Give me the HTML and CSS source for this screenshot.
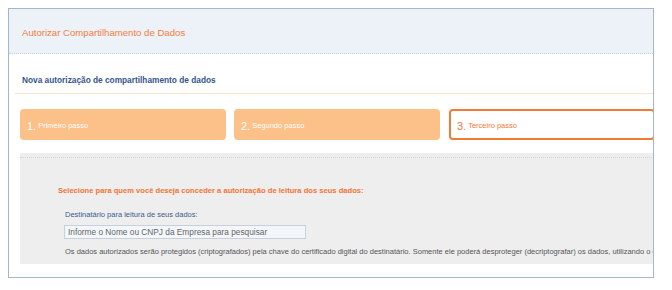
FILE: index.html
```html
<!DOCTYPE html>
<html lang="pt-BR">
<head>
    <meta charset="UTF-8">
    <meta name="viewport" content="width=device-width, initial-scale=1.0">
    <title>Autorizar Compartilhamento de Dados</title>
    <link rel="stylesheet" href="styles.css">
</head>
<body>
    <div class="frame">
        <!-- Cabeçalho -->
        <div class="header">
            <h1>Autorizar Compartilhamento de Dados</h1>
        </div>

        <div class="main">
            <h2 class="sub-title">Nova autorização de compartilhamento de dados</h2>

            <!-- Passos -->
            <div class="steps">
                <div class="step done"><span class="num">1.</span> Primeiro passo</div>
                <div class="step done"><span class="num">2.</span> Segundo passo</div>
                <div class="step active"><span class="num">3.</span> Terceiro passo</div>
            </div>

            <!-- Painel do terceiro passo -->
            <div class="panel">
                <div class="panel-inner">
                    <h3>Selecione para quem você deseja conceder a autorização de leitura dos seus dados:</h3>
                    <div class="field">
                        <label for="destinatario">Destinatário para leitura de seus dados:</label>
                        <input type="text" id="destinatario" placeholder="Informe o Nome ou CNPJ da Empresa para pesquisar">
                        <p class="note">Os dados autorizados serão protegidos (criptografados) pela chave do certificado digital do destinatário. Somente ele poderá desproteger (decriptografar) os dados, utilizando o certificado digital correspondente.</p>
                    </div>
                </div>
            </div>
        </div>
    </div>
</body>
</html>
```

FILE: styles.css
```css
body {
    font-family: "Liberation Sans", Arial, sans-serif;
    margin: 0;
    padding: 8px;
    background: #fff;
}

.frame {
    width: 644px;
    height: 268px;
    border: 1px solid #a3b6ca;
    overflow: hidden;
    background: #fff;
}

.header {
    height: 45px;
    box-sizing: border-box;
    display: flex;
    align-items: center;
    padding: 2px 0 0 13px;
    background: #edf2f8;
    border-bottom: 1px dotted #c3d1e1;
}

.header h1 {
    margin: 0;
    font-size: 9.6px;
    font-weight: normal;
    color: #f57d3f;
}

.main {
    padding-left: 6px;
}

.sub-title {
    margin: 0;
    padding: 21px 0 8px 7px;
    font-size: 8.3px;
    line-height: 10px;
    font-weight: bold;
    color: #34558b;
    border-bottom: 1px solid #fde2cc;
}

.steps {
    display: flex;
    gap: 8px;
    margin-top: 15px;
    padding-left: 5px;
}

.step {
    flex-shrink: 0;
    width: 206px;
    height: 31px;
    box-sizing: border-box;
    display: flex;
    align-items: center;
    padding: 2px 0 0 7px;
    border-radius: 4px;
    font-size: 7.5px;
}

.step .num {
    font-size: 11px;
    margin-right: 2px;
}

.step.done {
    background: #fcc089;
    color: #fff;
}

.step.active {
    margin-left: 1px;
    padding-left: 6px;
    background: #fff;
    border: 2px solid #f47b35;
    color: #f3773a;
}

.panel {
    width: 900px;
    height: 111px;
    box-sizing: border-box;
    margin: 13px 0 0 5px;
    padding-top: 4px;
    background: #eeeeee;
}

.panel-inner {
    border-top: 1px dotted #d4d4d4;
    padding: 28px 0 0 38px;
}

.panel-inner h3 {
    margin: 0;
    font-size: 7.6px;
    line-height: 10px;
    font-weight: bold;
    color: #f47434;
}

.field {
    margin-top: 14px;
    padding-left: 7px;
}

.field label {
    display: block;
    font-size: 7.5px;
    line-height: 10px;
    color: #3e5b8e;
}

.field input {
    display: block;
    width: 242px;
    height: 14px;
    box-sizing: border-box;
    margin: 5px 0 0 -1px;
    padding: 0 3px;
    font-family: "Liberation Sans", Arial, sans-serif;
    font-size: 8.3px;
    background: #f3f7fb;
    border: 1px solid #c7d0dc;
    outline: none;
}

.field input::placeholder {
    color: #666;
}

.note {
    margin: 8px 0 0;
    font-size: 7.5px;
    line-height: 10px;
    color: #555;
    white-space: nowrap;
}
```
